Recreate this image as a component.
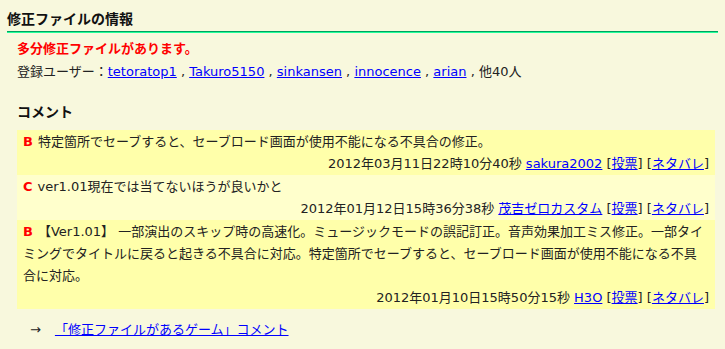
import React from "react";

interface Comment {
  rank: string;
  text: string;
  date: string;
  user: string;
  tone: "strong" | "light";
}

const users = ["tetoratop1", "Takuro5150", "sinkansen", "innocence", "arian"];

const comments: Comment[] = [
  {
    rank: "B",
    text: "特定箇所でセーブすると、セーブロード画面が使用不能になる不具合の修正。",
    date: "2012年03月11日22時10分40秒",
    user: "sakura2002",
    tone: "strong",
  },
  {
    rank: "C",
    text: "ver1.01現在では当てないほうが良いかと",
    date: "2012年01月12日15時36分38秒",
    user: "茂吉ゼロカスタム",
    tone: "light",
  },
  {
    rank: "B",
    text: "【Ver1.01】 一部演出のスキップ時の高速化。ミュージックモードの誤記訂正。音声効果加工ミス修正。一部タイミングでタイトルに戻ると起きる不具合に対応。特定箇所でセーブすると、セーブロード画面が使用不能になる不具合に対応。",
    date: "2012年01月10日15時50分15秒",
    user: "H3O",
    tone: "strong",
  },
];

const CommentRow: React.FC<{ c: Comment }> = ({ c }) => (
  <div
    className={
      c.tone === "strong"
        ? "bg-[#ffffaa] px-[6px] pt-px pb-px"
        : "bg-[#ffffcc] px-[6px] pt-px pb-px"
    }
  >
    <p className="leading-[22px]">
      <span className="font-bold text-[#ff0000] mr-[5px]">{c.rank}</span>
      {c.text}
    </p>
    <p className="text-right leading-[21px]">
      {c.date}{" "}
      <a href="#" className="text-[#0000ff] underline">
        {c.user}
      </a>{" "}
      [<a href="#" className="text-[#0000ff] underline">投票</a>]{" "}
      [<a href="#" className="text-[#0000ff] underline">ネタバレ</a>]
    </p>
  </div>
);

export default function App() {
  return (
    <div className="w-full h-[349px] bg-[#f8f8dd] text-[13px] text-[#222] font-['DejaVu_Sans','Noto_Sans_CJK_JP',sans-serif] overflow-hidden">
      <div className="mx-[7px] pt-[8px]">
        <h2 className="text-[14px] font-bold leading-[22px] text-[#111]">修正ファイルの情報</h2>
        <div className="mt-[1px] h-px bg-[#00a060]" />
        <div className="h-px bg-[#22ff99]" />
      </div>
      <div className="ml-[17px] mr-[10px]">
        <p className="mt-[4px] leading-[23px] font-bold text-[#ff0000]">多分修正ファイルがあります。</p>
        <p className="leading-[23px]">
          登録ユーザー：
          {users.map((u) => (
            <span key={u}>
              <a href="#" className="text-[#0000ff] underline">
                {u}
              </a>
              {" , "}
            </span>
          ))}
          他40人
        </p>
        <h3 className="mt-[18px] text-[14px] font-bold leading-[22px] text-[#111]">コメント</h3>
        <div className="mt-[7px]">
          {comments.map((c, i) => (
            <CommentRow key={i} c={c} />
          ))}
        </div>
        <p className="mt-[10px] ml-[13px] leading-[22px]">
          →
          <a href="#" className="ml-[14px] text-[#0000ff] underline">
            「修正ファイルがあるゲーム」コメント
          </a>
        </p>
      </div>
    </div>
  );
}
